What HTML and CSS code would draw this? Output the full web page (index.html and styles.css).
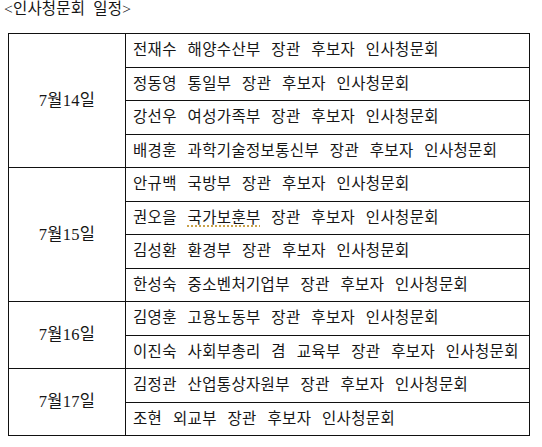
FILE: index.html
```html
<!DOCTYPE html>
<html lang="ko">
<head>
<meta charset="utf-8">
<link rel="stylesheet" href="styles.css">
</head>
<body>
<div class="title">&lt;인사청문회 일정&gt;</div>
<table class="schedule">
  <colgroup><col class="c-date"><col class="c-event"></colgroup>
  <tbody class="group">
    <tr><td class="date" rowspan="4">7월14일</td><td>전재수 해양수산부 장관 후보자 인사청문회</td></tr>
    <tr><td>정동영 통일부 장관 후보자 인사청문회</td></tr>
    <tr><td>강선우 여성가족부 장관 후보자 인사청문회</td></tr>
    <tr><td>배경훈 과학기술정보통신부 장관 후보자 인사청문회</td></tr>
  </tbody>
  <tbody class="group">
    <tr><td class="date" rowspan="4">7월15일</td><td>안규백 국방부 장관 후보자 인사청문회</td></tr>
    <tr><td>권오을 <span class="spell">국가보훈부</span> 장관 후보자 인사청문회</td></tr>
    <tr><td>김성환 환경부 장관 후보자 인사청문회</td></tr>
    <tr><td>한성숙 중소벤처기업부 장관 후보자 인사청문회</td></tr>
  </tbody>
  <tbody class="group">
    <tr><td class="date" rowspan="2">7월16일</td><td>김영훈 고용노동부 장관 후보자 인사청문회</td></tr>
    <tr><td>이진숙 사회부총리 겸 교육부 장관 후보자 인사청문회</td></tr>
  </tbody>
  <tbody class="group">
    <tr><td class="date" rowspan="2">7월17일</td><td>김정관 산업통상자원부 장관 후보자 인사청문회</td></tr>
    <tr><td>조현 외교부 장관 후보자 인사청문회</td></tr>
  </tbody>
</table>
</body>
</html>
```
FILE: styles.css
```css
html, body {
  margin: 0;
  padding: 0;
  background: #ffffff;
}
body {
  font-family: "Liberation Serif", "Noto Sans CJK KR", serif;
  color: #161616;
  font-size: 15.5px;
}
.title {
  padding: 0 0 0 4px;
  height: 33px;
  line-height: 17px;
  letter-spacing: 0.2px;
  word-spacing: 4px;
}
.schedule {
  margin-left: 8px;
  width: 522px;
  border-collapse: collapse;
  table-layout: fixed;
  border: 1.5px solid #111;
}
.c-date { width: 117px; }
.schedule td {
  border: 1px solid #111;
  height: 32.5px;
  padding: 0 0 0 7px;
  line-height: 18px;
  letter-spacing: 0.35px;
  word-spacing: 6.5px;
  white-space: nowrap;
  vertical-align: middle;
}
.schedule td.date {
  text-align: center;
  padding: 0;
  letter-spacing: 0.3px;
  font-size: 16.5px;
}
.group {
  border-top: 1.5px solid #111;
}
.spell {
  text-decoration: underline dotted #c9a24a;
  text-decoration-thickness: 1.5px;
  text-underline-offset: 3px;
}
```
